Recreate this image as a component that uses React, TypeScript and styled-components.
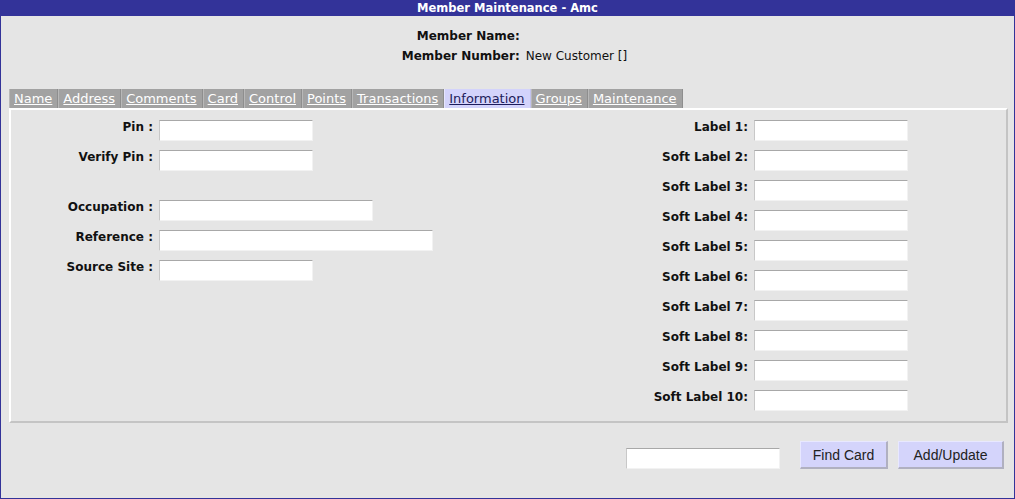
import React, { useState } from "react";
import styled, { createGlobalStyle } from "styled-components";

const GlobalStyle = createGlobalStyle`
  html, body {
    margin: 0;
    padding: 0;
    background: #e5e5e5;
  }
  body {
    font-family: "DejaVu Sans", Verdana, sans-serif;
    font-size: 12px;
    color: #111;
  }
`;

const Frame = styled.div`
  box-sizing: border-box;
  width: 1015px;
  height: 499px;
  border: 1px solid #333399;
  border-top: none;
  background: #e5e5e5;
  display: flex;
  flex-direction: column;
`;

const TitleBar = styled.div`
  height: 16px;
  line-height: 16px;
  background: #333399;
  color: #fff;
  font-weight: bold;
  font-size: 11.5px;
  text-align: center;
`;

const Header = styled.div`
  display: grid;
  grid-template-columns: auto auto;
  column-gap: 6px;
  row-gap: 6px;
  justify-content: center;
  padding: 13px 0 0 14px;
  height: 73px;
  box-sizing: border-box;
  align-content: start;
`;

const HeaderLabel = styled.div`
  font-weight: bold;
  text-align: right;
  line-height: 14px;
`;

const HeaderValue = styled.div`
  line-height: 14px;
`;

const Body = styled.div`
  padding: 0 6px 0 8px;
`;

const Tabs = styled.div`
  display: flex;
  height: 19px;
`;

const Tab = styled.a<{ $active?: boolean }>`
  display: block;
  padding: 0 5px 0 4px;
  line-height: 19px;
  font-size: 13px;
  background: ${(p) => (p.$active ? "#d3d3fb" : "#a2a2a2")};
  color: ${(p) => (p.$active ? "#1c1c5c" : "#fff")};
  text-decoration: underline;
  border-left: 1px solid ${(p) => (p.$active ? "#e6e6ff" : "#b8b8b8")};
  border-right: 1px solid ${(p) => (p.$active ? "#c2c2ee" : "#8e8e8e")};
  cursor: pointer;
`;

const Panel = styled.div`
  box-sizing: border-box;
  height: 315px;
  border-top: 2px solid #fff;
  border-left: 2px solid #fff;
  border-right: 2px solid #c4c4c4;
  border-bottom: 2px solid #c4c4c4;
  display: flex;
  padding-top: 10px;
`;

const Column = styled.div<{ $width: number }>`
  width: ${(p) => p.$width}px;
  display: flex;
  flex-direction: column;
`;

const Row = styled.div<{ $labelWidth: number }>`
  display: grid;
  grid-template-columns: ${(p) => p.$labelWidth}px auto;
  column-gap: 6px;
  height: 30px;
  align-items: start;
`;

const Spacer = styled.div`
  height: 20px;
`;

const Label = styled.label`
  font-weight: bold;
  text-align: right;
  line-height: 15px;
  white-space: nowrap;
`;

const Field = styled.input<{ $w: number }>`
  box-sizing: border-box;
  width: ${(p) => p.$w}px;
  height: 21px;
  margin: 0;
  padding: 1px 3px;
  background: #fff;
  border: 1px solid #f2f2f2;
  border-top-color: #a8a8a8;
  border-left-color: #c8c8c8;
  font-family: "Liberation Sans", Arial, sans-serif;
  font-size: 12px;
  outline: none;
`;

const Footer = styled.div`
  display: flex;
  justify-content: flex-end;
  align-items: flex-end;
  padding: 18px 4px 0 0;
  gap: 10px;
`;

const FooterField = styled(Field)`
  margin-right: 10px;
`;

const Button = styled.button<{ $w: number }>`
  box-sizing: border-box;
  width: ${(p) => p.$w}px;
  height: 28px;
  background: #d4d4fb;
  border: 1px solid #e8e8ff;
  border-right: 2px solid #b0b0c0;
  border-bottom: 2px solid #b0b0c0;
  font-family: "Liberation Sans", Arial, sans-serif;
  font-size: 14px;
  color: #222;
  padding: 0;
  cursor: pointer;
`;

const tabs = [
  "Name",
  "Address",
  "Comments",
  "Card",
  "Control",
  "Points",
  "Transactions",
  "Information",
  "Groups",
  "Maintenance",
];

const leftFields: ({ label: string; w: number } | null)[] = [
  { label: "Pin :", w: 154 },
  { label: "Verify Pin :", w: 154 },
  null,
  { label: "Occupation :", w: 214 },
  { label: "Reference :", w: 274 },
  { label: "Source Site :", w: 154 },
];

const rightFields = [
  "Label 1:",
  "Soft Label 2:",
  "Soft Label 3:",
  "Soft Label 4:",
  "Soft Label 5:",
  "Soft Label 6:",
  "Soft Label 7:",
  "Soft Label 8:",
  "Soft Label 9:",
  "Soft Label 10:",
];

const App: React.FC = () => {
  const [active, setActive] = useState("Information");

  return (
    <>
      <GlobalStyle />
      <Frame>
        <TitleBar>Member Maintenance - Amc</TitleBar>
        <Header>
          <HeaderLabel>Member Name:</HeaderLabel>
          <HeaderValue />
          <HeaderLabel>Member Number:</HeaderLabel>
          <HeaderValue>New Customer []</HeaderValue>
        </Header>
        <Body>
          <Tabs>
            {tabs.map((t) => (
              <Tab key={t} $active={t === active} onClick={() => setActive(t)}>
                {t}
              </Tab>
            ))}
          </Tabs>
          <Panel>
            <Column $width={586}>
              {leftFields.map((f, i) =>
                f ? (
                  <Row key={i} $labelWidth={142}>
                    <Label>{f.label}</Label>
                    <Field $w={f.w} />
                  </Row>
                ) : (
                  <Spacer key={i} />
                )
              )}
            </Column>
            <Column $width={400}>
              {rightFields.map((l) => (
                <Row key={l} $labelWidth={151}>
                  <Label>{l}</Label>
                  <Field $w={154} />
                </Row>
              ))}
            </Column>
          </Panel>
          <Footer>
            <FooterField $w={154} />
            <Button $w={88}>Find Card</Button>
            <Button $w={106}>Add/Update</Button>
          </Footer>
        </Body>
      </Frame>
    </>
  );
};

export default App;
